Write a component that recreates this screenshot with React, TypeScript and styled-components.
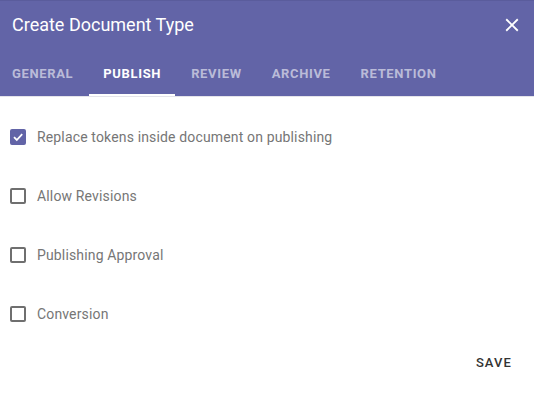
import React, { useState } from 'react'
import styled, { createGlobalStyle } from 'styled-components'

const GlobalStyle = createGlobalStyle`
  body {
    margin: 0;
    background: #ffffff;
    font-family: Roboto, 'Liberation Sans', Arial, sans-serif;
  }
`

const purple = '#6264a7'

const Dialog = styled.div`
  width: 534px;
  height: 401px;
  display: flex;
  flex-direction: column;
  background: #fff;
`

const Header = styled.header`
  background: ${purple};
  border-top: 1px solid #5a5c9c;
  box-shadow: 0 1px 0 #e4e4ea;
  display: flex;
  flex-direction: column;
`

const TitleRow = styled.div`
  height: 47px;
  display: flex;
  align-items: center;
  justify-content: space-between;
  padding: 0 12px;
`

const Title = styled.h1`
  margin: 0;
  color: #fff;
  font-size: 18px;
  font-weight: 400;
  margin-top: -1px;
`

const CloseButton = styled.button`
  width: 22px;
  height: 22px;
  padding: 0;
  border: 0;
  background: none;
  color: #fff;
  cursor: pointer;
  margin-right: -1px;
  display: flex;
  svg {
    width: 22px;
    height: 22px;
  }
`

const Tabs = styled.nav`
  height: 48px;
  display: flex;
  align-items: stretch;
`

const Tab = styled.button<{ $active?: boolean }>`
  border: 0;
  background: none;
  margin: 0 1px;
  padding: 5px 14px 0;
  font-family: Roboto, 'Liberation Sans', Arial, sans-serif;
  font-size: 13px;
  font-weight: 700;
  letter-spacing: 0.65px;
  text-transform: uppercase;
  color: ${p => (p.$active ? '#ffffff' : 'rgba(255, 255, 255, 0.58)')};
  border-bottom: 2px solid ${p => (p.$active ? '#ffffff' : 'transparent')};
  cursor: pointer;
  &:first-child {
    margin-left: -2px;
  }
`

const Content = styled.div`
  padding: 11px 10px 0;
  display: flex;
  flex-direction: column;
`

const Row = styled.label`
  height: 59px;
  display: flex;
  align-items: center;
  gap: 11px;
  font-size: 14px;
  letter-spacing: 0.15px;
  color: #767676;
  cursor: pointer;
`

const Box = styled.span<{ $checked: boolean }>`
  width: 16px;
  height: 16px;
  box-sizing: border-box;
  border-radius: 2px;
  border: 2px solid ${p => (p.$checked ? purple : '#6f6f6f')};
  background: ${p => (p.$checked ? purple : 'transparent')};
  display: flex;
  align-items: center;
  justify-content: center;
  flex-shrink: 0;
`

const Footer = styled.div`
  display: flex;
  justify-content: flex-end;
  padding: 1px 10px 0 0;
`

const SaveButton = styled.button`
  height: 36px;
  padding: 0 12px;
  border: 0;
  background: none;
  font-family: Roboto, 'Liberation Sans', Arial, sans-serif;
  font-size: 13px;
  font-weight: 500;
  letter-spacing: 1.1px;
  color: #333;
  cursor: pointer;
`

const tabs = ['General', 'Publish', 'Review', 'Archive', 'Retention']

const options = [
  { label: 'Replace tokens inside document on publishing', checked: true },
  { label: 'Allow Revisions', checked: false },
  { label: 'Publishing Approval', checked: false },
  { label: 'Conversion', checked: false }
]

const Checkbox: React.FC<{ checked: boolean }> = ({ checked }) => (
  <Box $checked={checked}>
    {checked && (
      <svg width="12" height="12" viewBox="0 0 12 12">
        <path d="M2 6.2 L4.8 9 L10.2 3.2" fill="none" stroke="#fff" strokeWidth="1.8" />
      </svg>
    )}
  </Box>
)

const App: React.FC = () => {
  const [active, setActive] = useState(1)
  const [checks, setChecks] = useState(options.map(o => o.checked))

  return (
    <>
      <GlobalStyle />
      <Dialog>
        <Header>
          <TitleRow>
            <Title>Create Document Type</Title>
            <CloseButton aria-label="close">
              <svg viewBox="0 0 24 24">
                <path
                  fill="currentColor"
                  d="M19 6.41L17.59 5 12 10.59 6.41 5 5 6.41 10.59 12 5 17.59 6.41 19 12 13.41 17.59 19 19 17.59 13.41 12z"
                />
              </svg>
            </CloseButton>
          </TitleRow>
          <Tabs>
            {tabs.map((t, i) => (
              <Tab key={t} $active={i === active} onClick={() => setActive(i)}>
                {t}
              </Tab>
            ))}
          </Tabs>
        </Header>
        <Content>
          {options.map((o, i) => (
            <Row
              key={o.label}
              onClick={() => setChecks(c => c.map((v, j) => (j === i ? !v : v)))}
            >
              <Checkbox checked={checks[i]} />
              {o.label}
            </Row>
          ))}
        </Content>
        <Footer>
          <SaveButton>SAVE</SaveButton>
        </Footer>
      </Dialog>
    </>
  )
}

export default App
